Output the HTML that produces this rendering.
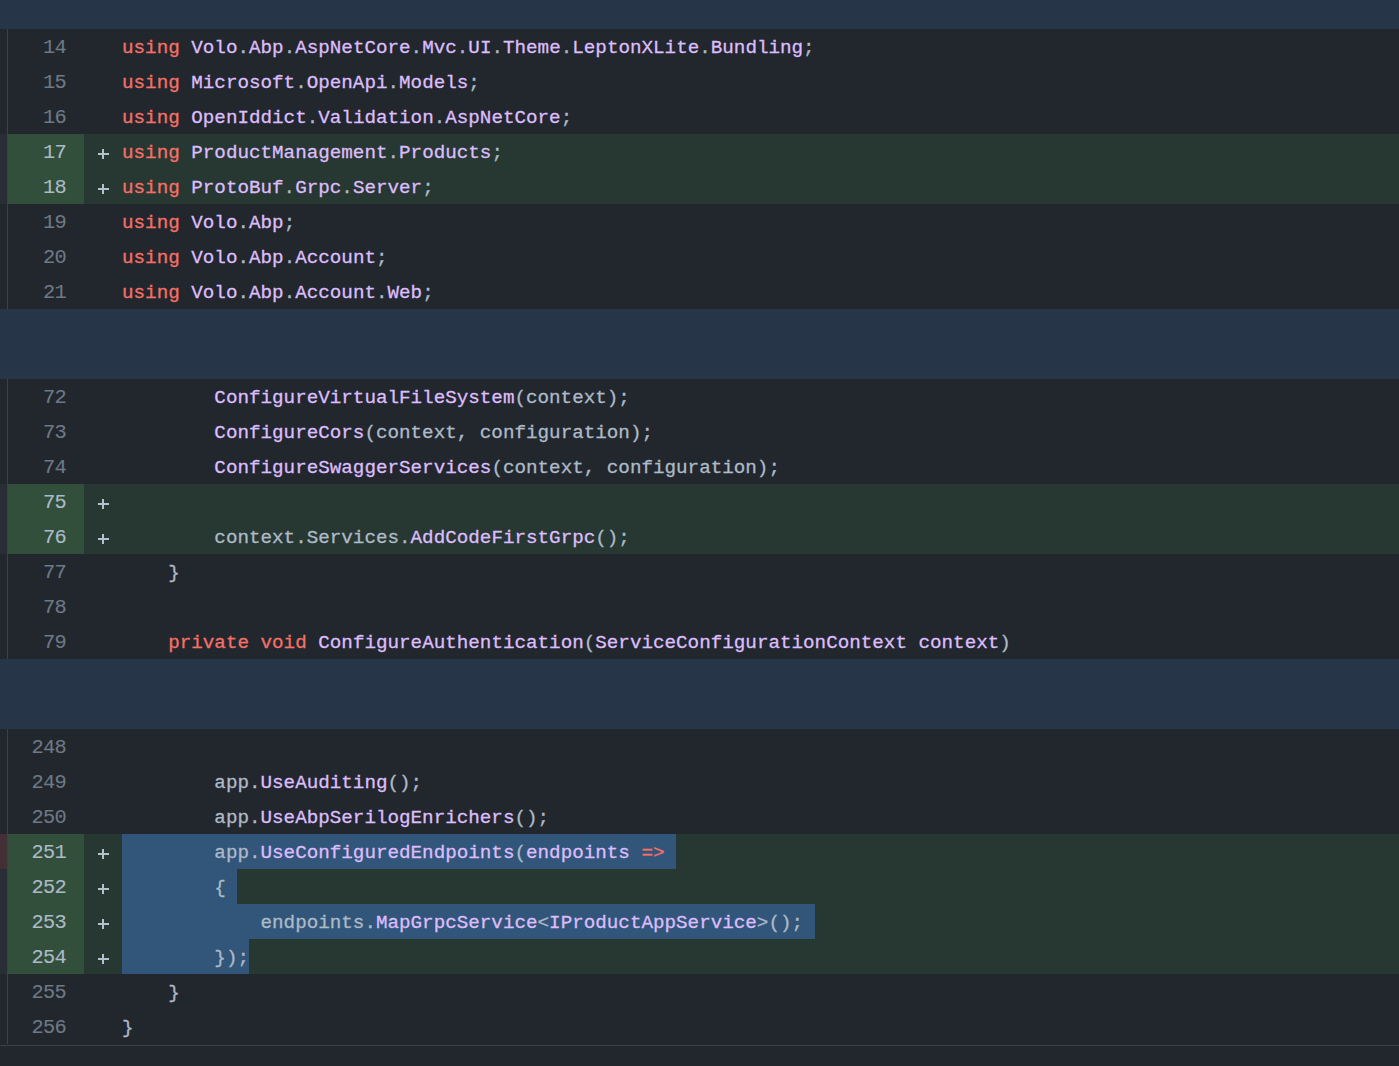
<!DOCTYPE html>
<html><head><meta charset="utf-8"><style>
html,body{margin:0;padding:0;}
body{width:1399px;height:1066px;background:#22272e;position:relative;overflow:hidden;font-family:"Liberation Mono",monospace;}
.hunk{position:absolute;left:0;width:1399px;height:70px;background:#273548;}
.top{position:absolute;left:0;top:0;width:1399px;height:29px;background:#273548;}
.vl{position:absolute;left:7px;top:29px;width:1px;height:1015px;background:#3b4149;}
.hl{position:absolute;left:0;top:1045px;width:1399px;height:1px;background:#3b4149;}
.strip{position:absolute;left:0;width:7px;height:35px;background:#282d36;}
.redp{z-index:2;position:absolute;left:0;top:834px;width:7px;height:35px;background:#432f35;}
.row{position:absolute;left:8px;width:1391px;height:35px;}
.num{position:absolute;left:0;top:0;width:76px;height:35px;box-sizing:border-box;padding-right:18px;padding-top:0.6px;text-align:right;color:#6e7985;font-size:20.3px;letter-spacing:-0.63px;line-height:35px;-webkit-text-stroke:0.1px currentColor;}
.code{position:absolute;left:76px;top:0;right:0;height:35px;}
.add .num{background:#324f3b;color:#adbac7;}
.add .code{background:#273732;}
.mh{position:absolute;left:14px;top:19px;width:11px;height:2px;background:#b4c0cb;}
.mv{position:absolute;left:18px;top:15px;width:2px;height:10px;background:#b4c0cb;}
.sel{position:absolute;left:38px;top:0;height:35px;background:#31567a;}
pre{position:absolute;left:38px;top:1.5px;-webkit-text-stroke:0.3px currentColor;margin:0;font-family:"Liberation Mono",monospace;font-size:19.24px;line-height:35px;color:#adbac7;white-space:pre;}
.k{color:#f47067;}
.e{color:#dcbdfb;}
</style></head><body>
<div class="top"></div>
<div class="vl"></div>
<div class="hl"></div>
<div class="row" style="top:29px"><div class="num">14</div><div class="code"><pre><span class="k">using</span> <span class="e">Volo</span>.<span class="e">Abp</span>.<span class="e">AspNetCore</span>.<span class="e">Mvc</span>.<span class="e">UI</span>.<span class="e">Theme</span>.<span class="e">LeptonXLite</span>.<span class="e">Bundling</span>;</pre></div></div>
<div class="row" style="top:64px"><div class="num">15</div><div class="code"><pre><span class="k">using</span> <span class="e">Microsoft</span>.<span class="e">OpenApi</span>.<span class="e">Models</span>;</pre></div></div>
<div class="row" style="top:99px"><div class="num">16</div><div class="code"><pre><span class="k">using</span> <span class="e">OpenIddict</span>.<span class="e">Validation</span>.<span class="e">AspNetCore</span>;</pre></div></div>
<div class="strip" style="top:134px"></div>
<div class="row add" style="top:134px"><div class="num">17</div><div class="code"><i class="mh"></i><i class="mv"></i><pre><span class="k">using</span> <span class="e">ProductManagement</span>.<span class="e">Products</span>;</pre></div></div>
<div class="strip" style="top:169px"></div>
<div class="row add" style="top:169px"><div class="num">18</div><div class="code"><i class="mh"></i><i class="mv"></i><pre><span class="k">using</span> <span class="e">ProtoBuf</span>.<span class="e">Grpc</span>.<span class="e">Server</span>;</pre></div></div>
<div class="row" style="top:204px"><div class="num">19</div><div class="code"><pre><span class="k">using</span> <span class="e">Volo</span>.<span class="e">Abp</span>;</pre></div></div>
<div class="row" style="top:239px"><div class="num">20</div><div class="code"><pre><span class="k">using</span> <span class="e">Volo</span>.<span class="e">Abp</span>.<span class="e">Account</span>;</pre></div></div>
<div class="row" style="top:274px"><div class="num">21</div><div class="code"><pre><span class="k">using</span> <span class="e">Volo</span>.<span class="e">Abp</span>.<span class="e">Account</span>.<span class="e">Web</span>;</pre></div></div>
<div class="hunk" style="top:309px"></div>
<div class="row" style="top:379px"><div class="num">72</div><div class="code"><pre>        <span class="e">ConfigureVirtualFileSystem</span>(context);</pre></div></div>
<div class="row" style="top:414px"><div class="num">73</div><div class="code"><pre>        <span class="e">ConfigureCors</span>(context, configuration);</pre></div></div>
<div class="row" style="top:449px"><div class="num">74</div><div class="code"><pre>        <span class="e">ConfigureSwaggerServices</span>(context, configuration);</pre></div></div>
<div class="strip" style="top:484px"></div>
<div class="row add" style="top:484px"><div class="num">75</div><div class="code"><i class="mh"></i><i class="mv"></i><pre></pre></div></div>
<div class="strip" style="top:519px"></div>
<div class="row add" style="top:519px"><div class="num">76</div><div class="code"><i class="mh"></i><i class="mv"></i><pre>        context.Services.<span class="e">AddCodeFirstGrpc</span>();</pre></div></div>
<div class="row" style="top:554px"><div class="num">77</div><div class="code"><pre>    }</pre></div></div>
<div class="row" style="top:589px"><div class="num">78</div><div class="code"><pre></pre></div></div>
<div class="row" style="top:624px"><div class="num">79</div><div class="code"><pre>    <span class="k">private</span> <span class="k">void</span> <span class="e">ConfigureAuthentication</span>(<span class="e">ServiceConfigurationContext</span> <span class="e">context</span>)</pre></div></div>
<div class="hunk" style="top:659px"></div>
<div class="row" style="top:729px"><div class="num">248</div><div class="code"><pre></pre></div></div>
<div class="row" style="top:764px"><div class="num">249</div><div class="code"><pre>        app.<span class="e">UseAuditing</span>();</pre></div></div>
<div class="row" style="top:799px"><div class="num">250</div><div class="code"><pre>        app.<span class="e">UseAbpSerilogEnrichers</span>();</pre></div></div>
<div class="strip" style="top:834px"></div>
<div class="row add" style="top:834px"><div class="num">251</div><div class="code"><i class="mh"></i><i class="mv"></i><div class="sel" style="width:554.21px"></div><pre>        app.<span class="e">UseConfiguredEndpoints</span>(<span class="e">endpoints</span> <span class="k">=&gt;</span></pre></div></div>
<div class="strip" style="top:869px"></div>
<div class="row add" style="top:869px"><div class="num">252</div><div class="code"><i class="mh"></i><i class="mv"></i><div class="sel" style="width:115.46px"></div><pre>        {</pre></div></div>
<div class="strip" style="top:904px"></div>
<div class="row add" style="top:904px"><div class="num">253</div><div class="code"><i class="mh"></i><i class="mv"></i><div class="sel" style="width:692.76px"></div><pre>            endpoints.<span class="e">MapGrpcService</span>&lt;<span class="e">IProductAppService</span>&gt;();</pre></div></div>
<div class="strip" style="top:939px"></div>
<div class="row add" style="top:939px"><div class="num">254</div><div class="code"><i class="mh"></i><i class="mv"></i><div class="sel" style="width:127.01px"></div><pre>        });</pre></div></div>
<div class="row" style="top:974px"><div class="num">255</div><div class="code"><pre>    }</pre></div></div>
<div class="row" style="top:1009px"><div class="num">256</div><div class="code"><pre>}</pre></div></div>
<div class="redp"></div>
</body></html>
